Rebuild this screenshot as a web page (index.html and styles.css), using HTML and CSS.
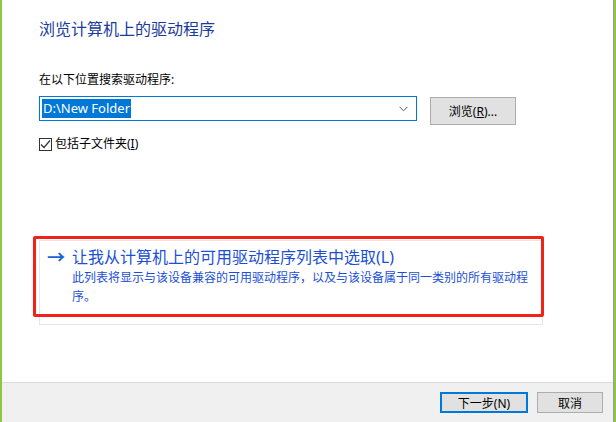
FILE: index.html
```html
<!DOCTYPE html>
<html lang="zh-CN">
<head>
<meta charset="utf-8">
<title>浏览计算机上的驱动程序</title>
<link rel="stylesheet" href="styles.css">
</head>
<body>
<div class="window">
  <div class="inner">
    <main class="content">
      <h1 class="title">浏览计算机上的驱动程序</h1>
      <div class="label">在以下位置搜索驱动程序:</div>
      <div class="path-row">
        <div class="combo">
          <span class="combo-text">D:\New Folder</span>
          <svg class="chevron" width="9" height="6" viewBox="0 0 9 6"><path d="M0.5 0.8 L4.5 4.8 L8.5 0.8" fill="none" stroke="#555" stroke-width="1"/></svg>
        </div>
        <button class="btn browse">浏览(<u>R</u>)...</button>
      </div>
      <label class="check-row">
        <span class="checkbox"><svg width="11" height="11" viewBox="0 0 11 11"><path d="M1 5.5 L4 8.5 L10 1.5" fill="none" stroke="#333" stroke-width="1.2"/></svg></span>
        <span>包括子文件夹(<u>I</u>)</span>
      </label>
      <div class="link-wrap">
        <div class="command-link">
          <div class="link-title"><span class="arrow">→</span><span>让我从计算机上的可用驱动程序列表中选取(L)</span></div>
          <div class="link-desc">此列表将显示与该设备兼容的可用驱动程序，以及与该设备属于同一类别的所有驱动程序。</div>
        </div>
        <div class="highlight"></div>
      </div>
    </main>
    <footer class="footer">
      <button class="btn next">下一步(N)</button>
      <button class="btn cancel">取消</button>
    </footer>
  </div>
</div>
</body>
</html>
```
FILE: styles.css
```css
* { box-sizing: border-box; }
html, body { margin: 0; padding: 0; }
body {
  width: 616px;
  height: 422px;
  overflow: hidden;
  background: #fff;
  font-family: "Noto Sans", "Noto Sans CJK SC", sans-serif;
  color: #000;
}
.window {
  width: 616px;
  height: 422px;
  border-left: 2px solid #8dc63f;
  border-right: 2px solid #8dc63f;
}
.inner {
  height: 100%;
  border-right: 1px solid #9c9c9c;
  display: flex;
  flex-direction: column;
}
.content {
  flex: 1;
  padding: 18px 0 0 37px;
}
.title {
  margin: 0;
  font-size: 16px;
  line-height: 22px;
  font-weight: normal;
  color: #1a3c9c;
}
.label {
  margin-top: 32px;
  font-size: 12px;
  line-height: 16px;
}
.path-row {
  display: flex;
  align-items: flex-start;
  gap: 13px;
  margin-top: 8px;
}
.combo {
  width: 378px;
  height: 25px;
  border: 1px solid #0078d7;
  display: flex;
  align-items: center;
  justify-content: space-between;
  padding: 0 8px 0 2px;
}
.combo-text {
  background: #0078d7;
  color: #fff;
  font-size: 13px;
  line-height: 19px;
  padding: 0 1px;
}
.chevron { margin-top: 1px; }
.btn {
  font-family: inherit;
  font-size: 12px;
  color: #000;
  background: #e1e1e1;
  border: 1px solid #adadad;
  padding: 0;
  margin: 0;
}
.browse {
  width: 86px;
  height: 28px;
  margin-top: 1px;
}
.check-row {
  display: flex;
  align-items: center;
  gap: 3px;
  margin-top: 12px;
  font-size: 12px;
  line-height: 14px;
}
.checkbox {
  width: 13px;
  height: 13px;
  border: 1px solid #333;
  display: flex;
  align-items: center;
  justify-content: center;
}
.link-wrap {
  position: relative;
  width: 504px;
  margin-top: 89px;
}
.command-link {
  border: 1px solid #e6e6e6;
  padding: 5px 10px 18px 7px;
  height: 85px;
}
.link-title {
  display: flex;
  align-items: center;
  font-size: 16px;
  line-height: 22px;
  color: #1c4fd6;
}
.arrow {
  width: 25px;
  font-size: 18px;
  font-weight: bold;
  color: #1e62d8;
}
.link-desc {
  margin-left: 25px;
  font-size: 12px;
  line-height: 19px;
  color: #1c4fd6;
}
.highlight {
  position: absolute;
  left: -6px;
  top: -4px;
  width: 511px;
  height: 81px;
  border: 3px solid #f22218;
  border-radius: 2px;
}
.footer {
  height: 40px;
  background: #f0f0f0;
  border-top: 1px solid #dcdcdc;
  display: flex;
  justify-content: flex-end;
  align-items: flex-start;
  gap: 9px;
  padding: 9px 10px 0 0;
}
.next {
  width: 88px;
  height: 21px;
  border: 2px solid #0078d7;
}
.cancel {
  width: 66px;
  height: 21px;
}
```
